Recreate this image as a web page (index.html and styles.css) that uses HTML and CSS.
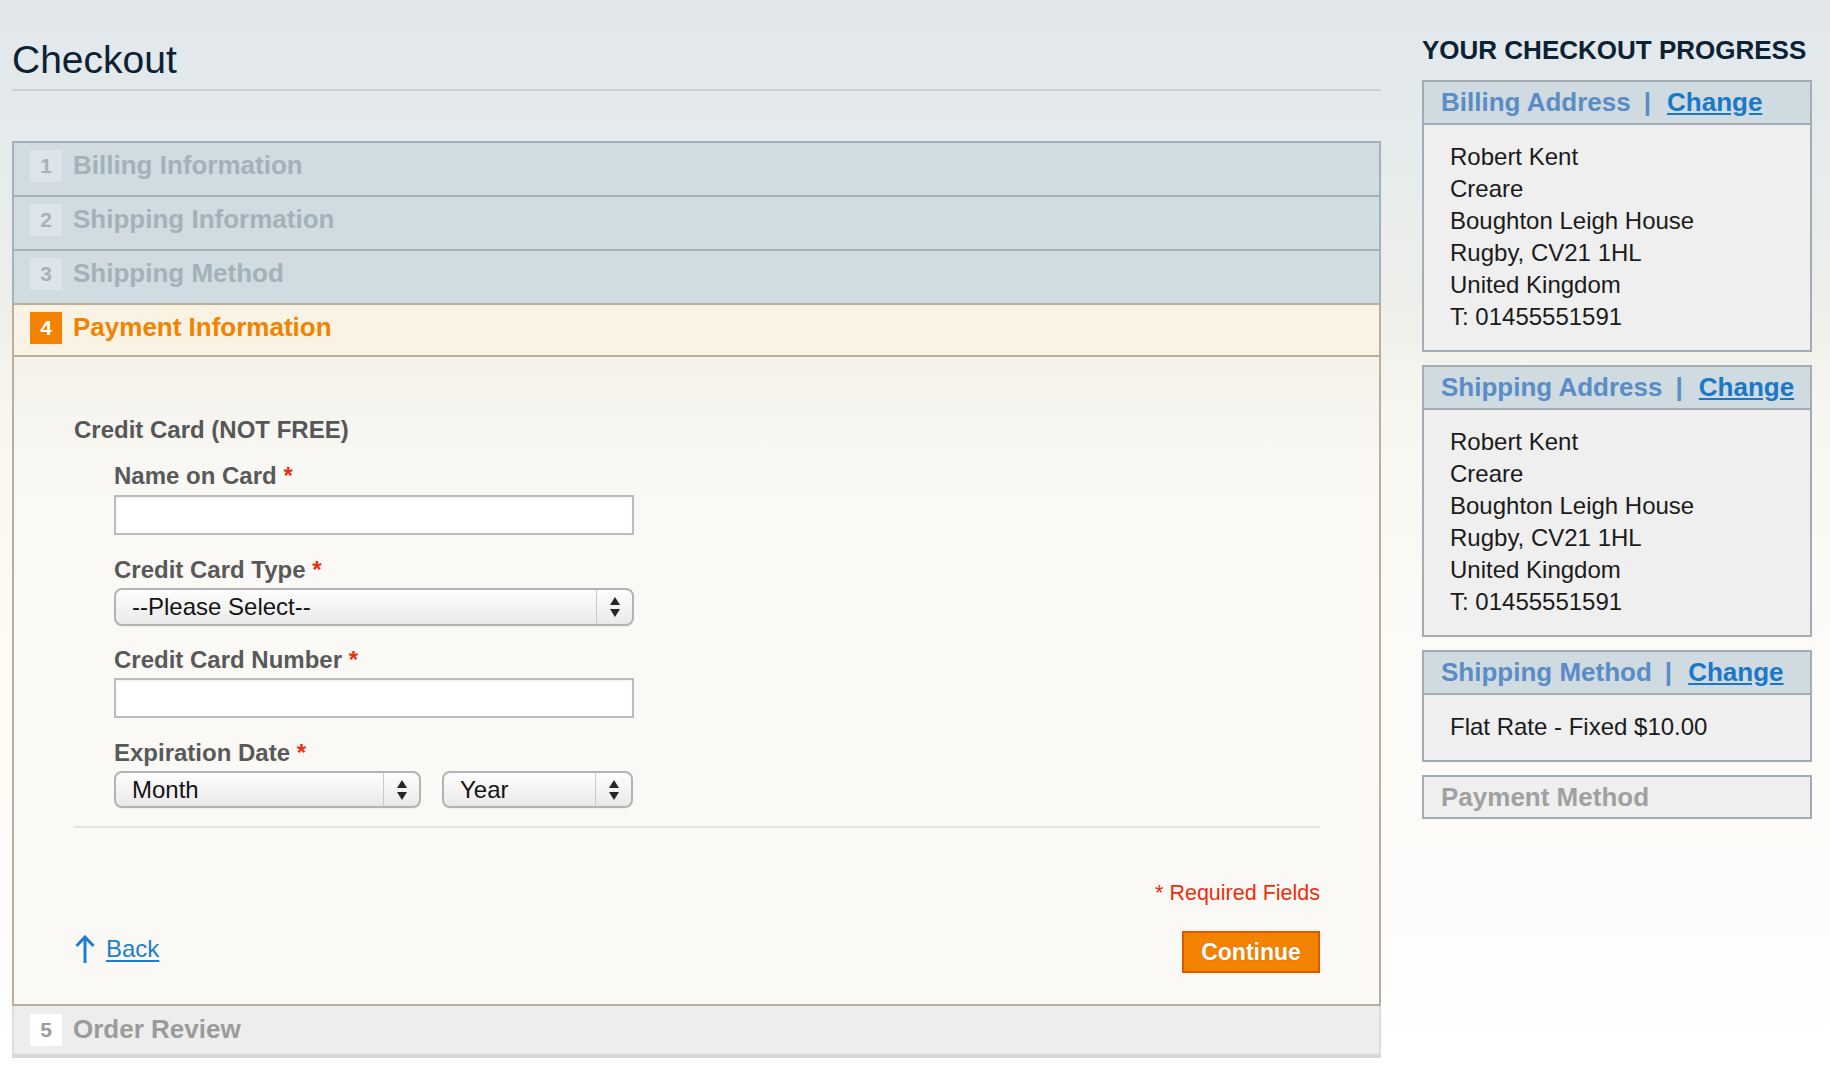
FILE: index.html
```html
<!DOCTYPE html>
<html lang="en">
<head>
<meta charset="utf-8">
<title>Checkout</title>
<link rel="stylesheet" href="styles.css">
</head>
<body>
<div class="page">
  <main class="main">
    <h1 class="page-title">Checkout</h1>
    <ol class="steps">
      <li class="step done">
        <div class="step-head"><span class="num">1</span><span class="step-title">Billing Information</span></div>
      </li>
      <li class="step done">
        <div class="step-head"><span class="num">2</span><span class="step-title">Shipping Information</span></div>
      </li>
      <li class="step done">
        <div class="step-head"><span class="num">3</span><span class="step-title">Shipping Method</span></div>
      </li>
      <li class="step active">
        <div class="step-head"><span class="num">4</span><span class="step-title">Payment Information</span></div>
        <div class="step-body">
          <h3 class="method-title">Credit Card (NOT FREE)</h3>
          <ul class="fields">
            <li class="field f1">
              <label class="label">Name on Card <em>*</em></label>
              <input class="text-input" type="text">
            </li>
            <li class="field f2">
              <label class="label">Credit Card Type <em>*</em></label>
              <div class="select wide">
                <span class="select-text">--Please Select--</span>
                <span class="select-arrows"><svg width="10" height="20" viewBox="0 0 10 20"><polygon points="0,8 5,0 10,8" /><polygon points="0,12 10,12 5,20" /></svg></span>
              </div>
            </li>
            <li class="field f3">
              <label class="label">Credit Card Number <em>*</em></label>
              <input class="text-input" type="text">
            </li>
            <li class="field f4">
              <label class="label">Expiration Date <em>*</em></label>
              <div class="date-row">
                <div class="select month short">
                  <span class="select-text">Month</span>
                  <span class="select-arrows"><svg width="10" height="20" viewBox="0 0 10 20"><polygon points="0,8 5,0 10,8" /><polygon points="0,12 10,12 5,20" /></svg></span>
                </div>
                <div class="select year short">
                  <span class="select-text">Year</span>
                  <span class="select-arrows"><svg width="10" height="20" viewBox="0 0 10 20"><polygon points="0,8 5,0 10,8" /><polygon points="0,12 10,12 5,20" /></svg></span>
                </div>
              </div>
            </li>
          </ul>
          <div class="sep"></div>
          <p class="required">* Required Fields</p>
          <div class="actions">
            <a class="back" href="#">
              <svg class="back-arrow" width="22" height="28" viewBox="0 0 22 28"><path d="M11 2 V28 M2.5 11 L11 2 L19.5 11" /></svg>
              <span class="back-text">Back</span>
            </a>
            <button class="btn" type="button">Continue</button>
          </div>
        </div>
      </li>
      <li class="step pending">
        <div class="step-head"><span class="num">5</span><span class="step-title">Order Review</span></div>
      </li>
    </ol>
  </main>

  <aside class="sidebar">
    <h2 class="side-title">YOUR CHECKOUT PROGRESS</h2>
    <div class="box">
      <div class="box-head"><span>Billing Address</span><span class="bar">|</span><a class="change" href="#">Change</a></div>
      <div class="box-body">
        <div>Robert Kent</div>
        <div>Creare</div>
        <div>Boughton Leigh House</div>
        <div>Rugby, CV21 1HL</div>
        <div>United Kingdom</div>
        <div>T: 01455551591</div>
      </div>
    </div>
    <div class="box">
      <div class="box-head"><span>Shipping Address</span><span class="bar">|</span><a class="change" href="#">Change</a></div>
      <div class="box-body">
        <div>Robert Kent</div>
        <div>Creare</div>
        <div>Boughton Leigh House</div>
        <div>Rugby, CV21 1HL</div>
        <div>United Kingdom</div>
        <div>T: 01455551591</div>
      </div>
    </div>
    <div class="box">
      <div class="box-head"><span>Shipping Method</span><span class="bar">|</span><a class="change" href="#">Change</a></div>
      <div class="box-body">
        <div>Flat Rate - Fixed $10.00</div>
      </div>
    </div>
    <div class="box inactive">
      <div class="box-head"><span>Payment Method</span></div>
    </div>
  </aside>
</div>
</body>
</html>
```

FILE: styles.css
```css
* { box-sizing: border-box; }

html, body {
  margin: 0;
  padding: 0;
}

body {
  font-family: "Liberation Sans", Arial, sans-serif;
  min-height: 1082px;
  background: linear-gradient(180deg, #e1e7eb 0px, #e6ebec 170px, #eeefea 300px, #f8f6f0 420px, #fcfaf6 620px, #fdfcfa 900px, #ffffff 1060px);
}

.page {
  display: flex;
  gap: 41px;
  padding: 0 18px 0 12px;
}

.main {
  width: 1369px;
  flex: none;
}

.page-title {
  margin: 0;
  padding: 40px 0 10px;
  font-size: 39px;
  line-height: 39px;
  font-weight: normal;
  color: #0b2234;
  border-bottom: 2px solid #cdd1d2;
}

/* Steps */
.steps {
  list-style: none;
  margin: 50px 0 0;
  padding: 0;
}

.step-head {
  display: flex;
  align-items: flex-start;
  padding-left: 16px;
}

.num {
  width: 32px;
  height: 32px;
  flex: none;
  display: flex;
  align-items: center;
  justify-content: center;
  font-size: 21px;
  font-weight: bold;
  margin-right: 11px;
}

.step-title {
  font-size: 26px;
  line-height: 30px;
  font-weight: bold;
}

.step.done .step-head {
  height: 54px;
  padding-top: 7px;
  background: #d0dbe2;
  border: 2px solid #a4b1b9;
  border-bottom: none;
}

.step.done .num {
  background: #dce5ea;
  color: #a5b4bc;
}

.step.done .step-title {
  color: #a3b2ba;
}

.step.active .step-head {
  height: 54px;
  padding-top: 7px;
  background: #faf3e3;
  border: 2px solid #bcae9c;
}

.step.active .num {
  background: #f38200;
  color: #ffffff;
}

.step.active .step-title {
  color: #f38200;
}

.step-body {
  padding: 58px 59px 31px 60px;
  border: 2px solid #bcae9c;
  border-top: none;
  background: linear-gradient(180deg, #f4f1e9 0px, #f9f8f4 110px, #faf9f6 200px);
}

.method-title {
  margin: 0;
  font-size: 24px;
  line-height: 30px;
  font-weight: bold;
  color: #575757;
}

.fields {
  list-style: none;
  margin: 0;
  padding: 0 0 0 40px;
}

.field { display: flex; flex-direction: column; align-items: flex-start; }
.f1 { margin-top: 16px; }
.f2 { margin-top: 20px; }
.f3 { margin-top: 19px; }
.f4 { margin-top: 20px; }

.label {
  font-size: 24px;
  line-height: 30px;
  font-weight: bold;
  color: #595959;
}

.label em {
  font-style: normal;
  color: #eb2f0c;
}

.text-input {
  display: block;
  width: 520px;
  height: 40px;
  margin: 4px 0 0;
  border: 2px solid #bcbcbc;
  background: #ffffff;
  box-shadow: inset 0 1px 2px rgba(0, 0, 0, 0.06);
  font: 24px "Liberation Sans", Arial, sans-serif;
}

.f3 .text-input { margin-top: 3px; }

.select {
  display: flex;
  align-items: center;
  height: 38px;
  margin-top: 3px;
  border: 2px solid #b3b3b3;
  border-radius: 8px;
  background: linear-gradient(180deg, #fdfdfd 0%, #f5f5f5 45%, #e9e9e9 100%);
  box-shadow: 0 1px 1px rgba(0, 0, 0, 0.05);
}

.select.wide { width: 520px; }
.select.short { height: 37px; }
.select.month { width: 307px; }
.select.year { width: 191px; }

.select-text {
  flex: 1;
  padding-left: 16px;
  font-size: 24px;
  line-height: 30px;
  color: #141414;
}

.select-arrows {
  width: 36px;
  align-self: stretch;
  display: flex;
  align-items: center;
  justify-content: center;
  border-left: 1px solid #c9c9c9;
}

.select-arrows svg { fill: #262626; }

.date-row {
  display: flex;
  gap: 21px;
}

.sep {
  margin-top: 18px;
  border-top: 2px solid #e4e2de;
}

.required {
  margin: 52px 0 0;
  text-align: right;
  font-size: 21.5px;
  line-height: 26px;
  color: #ea2f0c;
}

.actions {
  display: flex;
  justify-content: space-between;
  align-items: flex-start;
  margin-top: 25px;
}

.back {
  display: flex;
  align-items: center;
  gap: 10px;
  margin-top: 3px;
  color: #1d7ecb;
  font-size: 24px;
  line-height: 30px;
  text-decoration: none;
}

.back-text { text-decoration: underline; text-underline-offset: 3px; }

.back-arrow path {
  fill: none;
  stroke: #1d7ecf;
  stroke-width: 3;
}

.btn {
  width: 138px;
  height: 42px;
  padding: 0;
  background: #f38200;
  border: 2px solid #de5800;
  color: #ffffff;
  font: bold 23px "Liberation Sans", Arial, sans-serif;
  text-shadow: 0 0 1px rgba(120, 50, 0, 0.35);
}

.step.pending .step-head {
  height: 52px;
  padding-top: 8px;
  background: #ededee;
  border-left: 2px solid #d9dde0;
  border-right: 2px solid #d9dde0;
  border-bottom: 4px solid #d4d6d8;
}

.step.pending .num {
  background: #ffffff;
  color: #9a9a9a;
}

.step.pending .step-title {
  color: #9b9b9b;
}

/* Sidebar */
.sidebar {
  width: 390px;
  flex: none;
  padding-top: 35px;
}

.side-title {
  margin: 0 0 15px;
  font-size: 26px;
  line-height: 30px;
  font-weight: bold;
  color: #0b2234;
}

.box {
  border: 2px solid #a1acb4;
  margin-bottom: 13px;
  background: #efefef;
}

.box-head {
  height: 43px;
  line-height: 41px;
  padding-left: 17px;
  background: #cfdae1;
  border-bottom: 2px solid #a1acb4;
  font-size: 26px;
  font-weight: bold;
  color: #5a8cc5;
  white-space: nowrap;
}

.bar {
  margin: 0 16px 0 13px;
}

.change {
  color: #1a78c8;
  text-decoration: underline;
  text-underline-offset: 2px;
}

.box-body {
  padding: 16px 0 17px 26px;
  font-size: 24px;
  line-height: 32px;
  color: #1b1b1b;
}

.box.inactive .box-head {
  height: 40px;
  line-height: 40px;
  background: #efefef;
  border-bottom: none;
  color: #a0a0a0;
}
```
